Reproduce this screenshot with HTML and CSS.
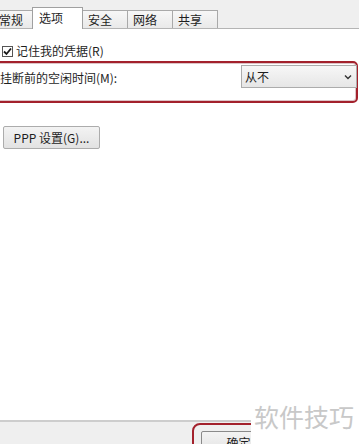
FILE: index.html
```html
<!DOCTYPE html>
<html lang="zh-CN">

<head>
    <meta charset="UTF-8">
    <meta name="viewport" content="width=device-width, initial-scale=1.0">
    <title>选项</title>
    <link rel="stylesheet" href="styles.css">
</head>

<body>
    <div class="dialog">
        <div class="tabbar">
            <div class="tab first">常规</div>
            <div class="tab active">选项</div>
            <div class="tab">安全</div>
            <div class="tab">网络</div>
            <div class="tab">共享</div>
        </div>

        <div class="panel">
            <label class="check-row">
                <span class="checkbox">
                    <svg width="9" height="9" viewBox="0 0 9 9">
                        <path d="M1 4.5 L3.5 7 L8 1.5" fill="none" stroke="#1a1a1a" stroke-width="1.8" />
                    </svg>
                </span>
                记住我的凭据(R)
            </label>

            <div class="idle-box">
                <div class="idle-row">
                    <span class="idle-label">挂断前的空闲时间(M):</span>
                    <div class="select">
                        <span>从不</span>
                        <svg width="8" height="6" viewBox="0 0 8 6">
                            <path d="M1 1.5 L4 4.5 L7 1.5" fill="none" stroke="#333" stroke-width="1.4" />
                        </svg>
                    </div>
                </div>
            </div>

            <button class="btn ppp">PPP 设置(G)...</button>
        </div>

        <div class="footer">
            <div class="ok-mark">
                <button class="btn ok">确定</button>
            </div>
        </div>

        <div class="watermark">软件技巧</div>
    </div>
</body>

</html>
```

FILE: styles.css
```css
body {
    margin: 0;
    font-family: "Noto Sans CJK SC", "Noto Sans", sans-serif;
    font-size: 12px;
    color: #1e1e1e;
    background: #ffffff;
}

.dialog {
    position: relative;
    width: 359px;
    height: 444px;
    overflow: hidden;
    display: flex;
    flex-direction: column;
}

/* tabs */
.tabbar {
    height: 28px;
    display: flex;
    align-items: flex-end;
    background: #efefef;
    border-bottom: 1px solid #b4b4b4;
}

.tab {
    box-sizing: border-box;
    width: 46px;
    height: 18px;
    margin-left: -1px;
    padding-left: 5px;
    line-height: 17px;
    border: 1px solid #a9a9a9;
    border-bottom: none;
    background: linear-gradient(#f7f7f7, #e9e9e9);
}

.tab.first {
    margin-left: -14px;
    width: 47px;
    padding-left: 12px;
}

.tab.active {
    width: 51px;
    height: 22px;
    margin-bottom: -1px;
    padding-left: 6px;
    line-height: 20px;
    background: #ffffff;
    border-color: #a0a0a0;
    position: relative;
    z-index: 1;
}

/* panel */
.panel {
    flex: 1;
    background: #ffffff;
    padding-top: 16px;
}

.check-row {
    display: flex;
    align-items: center;
    gap: 3px;
    height: 12px;
    padding-left: 2px;
    line-height: 12px;
}

.checkbox {
    box-sizing: border-box;
    width: 11px;
    height: 11px;
    border: 1px solid #555;
    background: #fff;
    display: flex;
    align-items: center;
    justify-content: center;
}

.idle-box {
    height: 36px;
    margin-top: 4px;
    margin-left: -10px;
    margin-right: 1px;
    padding-top: 2px;
    border: 2px solid #a3212c;
    border-radius: 0 5px 5px 0;
    box-shadow: inset 0 0 0 1px rgba(120, 20, 30, 0.25);
}

.idle-row {
    display: flex;
    align-items: center;
    justify-content: space-between;
    height: 23px;
    padding-left: 8px;
}

.idle-label {
    margin-top: 2px;
}

.select {
    box-sizing: border-box;
    width: 116px;
    height: 23px;
    margin-right: -1px;
    display: flex;
    align-items: center;
    justify-content: space-between;
    padding: 0 4px 0 3px;
    border: 1px solid #acacac;
    background: linear-gradient(#f7f7f7, #e6e6e6);
}

/* buttons */
.btn {
    box-sizing: border-box;
    height: 23px;
    font-family: inherit;
    font-size: 12px;
    color: #1e1e1e;
    border: 1px solid #acacac;
    border-radius: 2px;
    background: linear-gradient(#f3f3f3, #e2e2e2);
    padding: 0;
}

.ppp {
    width: 97px;
    margin-top: 23px;
    margin-left: 3px;
}

/* footer */
.footer {
    height: 21px;
    border-top: 2px solid #cdcdcd;
    background: #efefef;
    padding-left: 192px;
    padding-top: 1px;
}

.ok-mark {
    width: 90px;
    height: 30px;
    border: 2px solid #a3212c;
    border-radius: 8px 8px 0 0;
    padding: 6px 0 0 7px;
    box-sizing: border-box;
}

.ok {
    width: 75px;
    border-color: #8a8a8a;
    line-height: 14px;
    padding-top: 1px;
    vertical-align: top;
}

.watermark {
    position: absolute;
    left: 251px;
    top: 396px;
    width: 108px;
    height: 48px;
    padding-left: 3px;
    box-sizing: border-box;
    background: #ffffff;
    color: #c8c8c8;
    font-size: 25px;
    line-height: 40px;
}
```
